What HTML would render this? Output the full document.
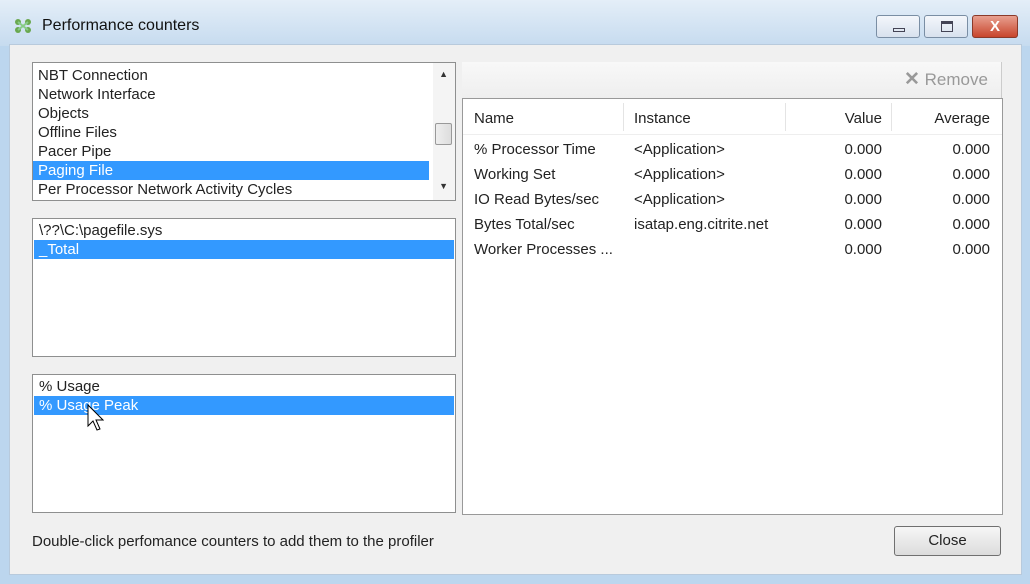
<!DOCTYPE html>
<html><head><style>
*{box-sizing:border-box;margin:0;padding:0}
body{width:1030px;height:584px;background:#bcd6ee;font-family:"Liberation Sans",sans-serif;font-size:15px;color:#222;position:relative;overflow:hidden}
.abs{position:absolute}
.title{left:0;top:0;width:1030px;height:46px;background:linear-gradient(#e4eef8,#c6dbef)}
.client{left:9px;top:44px;width:1013px;height:531px;background:#f0f0f0;border:1px solid #b8cadc}
.box{background:#fff;border:1px solid #8e8f8f}
.row{height:19px;line-height:19px;padding-left:5px;white-space:nowrap}
.sel{background:#3399ff;color:#fff}
.btn{border:1px solid #7a8ea4;border-radius:3px;background:linear-gradient(#f4f7fb,#d8e2ee)}
</style></head><body>
<div class="abs title"></div>
<div class="abs" style="left:14px;top:18px;width:18px;height:16px">
<svg width="18" height="16"><circle cx="4" cy="4" r="3" fill="#6aa84f"/><circle cx="14" cy="4" r="3" fill="#6aa84f"/><circle cx="4" cy="12" r="3" fill="#6aa84f"/><circle cx="14" cy="12" r="3" fill="#6aa84f"/><path d="M4 4L14 12M14 4L4 12" stroke="#8c8" stroke-width="2"/></svg></div>
<div class="abs" style="left:42px;top:17px;font-size:16px;color:#111">Performance counters</div>
<div class="abs btn" style="left:876px;top:15px;width:44px;height:23px"><div class="abs" style="left:16px;top:12px;width:12px;height:4px;border:1px solid #445"></div></div>
<div class="abs btn" style="left:924px;top:15px;width:44px;height:23px"><div class="abs" style="left:16px;top:5px;width:12px;height:11px;border:1px solid #445;border-top-width:3px"></div></div>
<div class="abs" style="left:972px;top:15px;width:46px;height:23px;border:1px solid #8a3a2a;border-radius:3px;background:linear-gradient(#e8a090,#c8452c);color:#fff;font-weight:bold;text-align:center;line-height:21px;font-size:15px">X</div>
<div class="abs client"></div>

<div class="abs box" style="left:32px;top:62px;width:424px;height:139px;padding-top:3px">
<div class="row">NBT Connection</div><div class="row">Network Interface</div><div class="row">Objects</div><div class="row">Offline Files</div><div class="row">Pacer Pipe</div><div class="row sel" style="width:396px">Paging File</div><div class="row">Per Processor Network Activity Cycles</div>
<div class="abs" style="right:0;top:0;width:22px;height:137px;background:#f4f4f4"></div>
<div class="abs" style="right:7px;top:6px;font-size:9px;color:#333">▲</div>
<div class="abs" style="right:7px;top:118px;font-size:9px;color:#333">▼</div>
<div class="abs" style="right:3px;top:60px;width:17px;height:22px;border:1px solid #999;border-radius:2px;background:linear-gradient(90deg,#eee,#ddd)"></div>
</div>
<div class="abs box" style="left:32px;top:218px;width:424px;height:139px;padding:2px 1px">
<div class="row">\??\C:\pagefile.sys</div><div class="row sel">_Total</div></div>
<div class="abs box" style="left:32px;top:374px;width:424px;height:139px;padding:2px 1px">
<div class="row">% Usage</div><div class="row sel">% Usage Peak</div></div>
<svg class="abs" style="left:86px;top:404px" width="18" height="30"><path d="M2 1V22L7 17L11 26L14 25L10 16H17Z" fill="#fff" stroke="#000"/></svg>

<div class="abs" style="left:462px;top:62px;width:540px;height:37px;background:linear-gradient(#f8f8f8,#eee);border-right:1px solid #ccc"></div>
<div class="abs" style="left:904px;top:68px;color:#999;font-size:17px"><span style="font-weight:bold;font-size:19px">✕</span> Remove</div>
<div class="abs box" style="left:462px;top:98px;width:541px;height:417px;border-color:#999">
<div class="abs" style="left:0;top:0;width:539px;height:36px;border-bottom:1px solid #eee"></div>
<div class="abs" style="left:160px;top:4px;width:1px;height:28px;background:#e4e4e4"></div>
<div class="abs" style="left:322px;top:4px;width:1px;height:28px;background:#e4e4e4"></div>
<div class="abs" style="left:428px;top:4px;width:1px;height:28px;background:#e4e4e4"></div>
<div class="abs" style="left:11px;top:11px">Name</div><div class="abs" style="left:171px;top:11px">Instance</div>
<div class="abs" style="right:120px;top:11px">Value</div><div class="abs" style="right:12px;top:11px">Average</div>
<div class="abs" style="left:11px;top:38px;line-height:25px">% Processor Time<br>Working Set<br>IO Read Bytes/sec<br>Bytes Total/sec<br>Worker Processes ...</div>
<div class="abs" style="left:171px;top:38px;line-height:25px">&lt;Application&gt;<br>&lt;Application&gt;<br>&lt;Application&gt;<br>isatap.eng.citrite.net</div>
<div class="abs" style="right:120px;top:38px;line-height:25px;text-align:right">0.000<br>0.000<br>0.000<br>0.000<br>0.000</div>
<div class="abs" style="right:12px;top:38px;line-height:25px;text-align:right">0.000<br>0.000<br>0.000<br>0.000<br>0.000</div>
</div>
<div class="abs" style="left:32px;top:533px">Double-click perfomance counters to add them to the profiler</div>
<div class="abs" style="left:894px;top:526px;width:107px;height:30px;border:1px solid #707070;border-radius:3px;background:linear-gradient(#f6f6f6,#dcdcdc);text-align:center;line-height:28px">Close</div>
</body></html>
